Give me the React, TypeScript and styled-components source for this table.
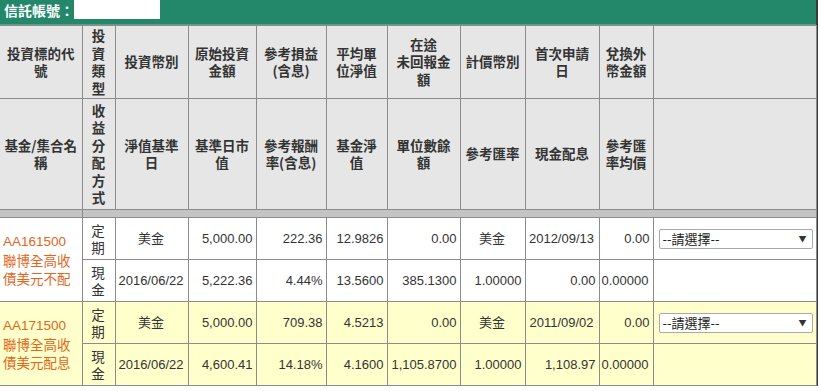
import { Fragment } from "react";
import styled, { createGlobalStyle } from "styled-components";

const GlobalStyle = createGlobalStyle`
  body {
    margin: 0;
    background: #ffffff;
    font-family: "Liberation Sans", "Noto Sans CJK TC", sans-serif;
  }
`;

const Panel = styled.div`
  width: 816px;
  border-right: 2px solid #3a3a3a;
`;

const TitleBar = styled.div`
  height: 25px;
  background-color: #23876a;
  border-bottom: 1px solid #5f9c89;
  box-sizing: border-box;
  display: flex;
  align-items: flex-start;
  padding-left: 4px;
`;

const TitleText = styled.span`
  color: #ffffff;
  font-family: "Noto Sans CJK TC", sans-serif;
  font-weight: 700;
  font-size: 14px;
  line-height: 20px;
`;

const AccountBox = styled.span`
  display: inline-block;
  width: 86px;
  height: 19px;
  background: #ffffff;
`;

const Table = styled.table`
  width: 816px;
  border-collapse: collapse;
  table-layout: fixed;
`;

const HeadCell = styled.th`
  background: #e6e6e6;
  border: 1px solid #8c8c8c;
  border-left: none;
  color: #333333;
  font-family: "Noto Sans CJK TC", sans-serif;
  font-weight: 700;
  font-size: 13.5px;
  line-height: 17.5px;
  padding: 0;
  text-align: center;
  vertical-align: middle;
`;

/* wraps its text at a fixed width, so the lines break where the original ones do */
const Wrap = styled.span<{ $w: number }>`
  display: block;
  width: ${(p) => p.$w}em;
  margin: 0 auto;
  word-break: break-all;
  white-space: pre-line;
`;

const SepCell = styled.td`
  background: #c4c4c4;
  border: 1px solid #8c8c8c;
  border-left: none;
  height: 7px;
  padding: 0;
`;

const Row = styled.tr<{ $alt?: boolean }>`
  background: ${(p) => (p.$alt ? "#ffffcc" : "#ffffff")};
`;

const Cell = styled.td<{ $align?: "left" | "center" | "right" }>`
  border: 1px solid #8c8c8c;
  border-left: none;
  color: #333333;
  font-size: 13px;
  line-height: 17px;
  height: 42px;
  padding: 0 3px 0 2px;
  box-sizing: border-box;
  text-align: ${(p) => p.$align ?? "right"};
  vertical-align: middle;
  white-space: nowrap;
`;

const FundCell = styled.td`
  border: 1px solid #8c8c8c;
  border-left: none;
  color: #e2661c;
  font-size: 13.5px;
  line-height: 17.5px;
  padding: 0 2px 0 3px;
  text-align: left;
  vertical-align: middle;
`;

const FundCode = styled.span`
  display: block;
  line-height: 20px;
`;

const FundName = styled.span`
  display: block;
  width: 5.3em;
  font-family: "Noto Sans CJK TC", sans-serif;
  word-break: break-all;
`;

const Stack = styled.span`
  display: block;
  width: 1.3em;
  margin: 0 auto;
  font-family: "Noto Sans CJK TC", sans-serif;
  font-size: 13.5px;
  line-height: 17px;
  text-align: center;
  white-space: normal;
  word-break: break-all;
`;

const SelectBox = styled.div`
  width: 144px;
  height: 18px;
  margin-left: 3px;
  border: 1px solid #a9a9a9;
  border-radius: 2px;
  background: #ffffff;
  display: flex;
  align-items: center;
  justify-content: space-between;
  padding: 0 5px 0 3px;
  font-family: "Noto Sans CJK TC", sans-serif;
  font-size: 13px;
  color: #222222;
`;

const Arrow = styled.span`
  font-size: 8px;
  color: #333333;
`;

const widths = [82, 33, 73, 68, 70, 61, 73, 65, 74, 54, 163];

type Head = { text: string; w: number };

const head1: Head[] = [
  { text: "投資標的代號", w: 5.3 },
  { text: "投資類型", w: 1.3 },
  { text: "投資幣別", w: 4.3 },
  { text: "原始投資金額", w: 4.3 },
  { text: "參考損益(含息)", w: 4.3 },
  { text: "平均單位淨值", w: 3.3 },
  { text: "在途\n未回報金額", w: 4.3 },
  { text: "計價幣別", w: 4.3 },
  { text: "首次申請日", w: 4.3 },
  { text: "兌換外幣金額", w: 3.3 },
  { text: "", w: 1 },
];

const head2: Head[] = [
  { text: "基金/集合名稱", w: 5.6 },
  { text: "收益分配方式", w: 1.3 },
  { text: "淨值基準日", w: 4.3 },
  { text: "基準日市值", w: 4.3 },
  { text: "參考報酬率(含息)", w: 4.3 },
  { text: "基金淨值", w: 3.3 },
  { text: "單位數餘額", w: 4.3 },
  { text: "參考匯率", w: 4.3 },
  { text: "現金配息", w: 4.3 },
  { text: "參考匯率均價", w: 3.3 },
  { text: "", w: 1 },
];

type Fund = {
  code: string;
  name: string;
  top: string[];
  bottom: string[];
};

const funds: Fund[] = [
  {
    code: "AA161500",
    name: "聯博全高收債美元不配",
    top: ["美金", "5,000.00", "222.36", "12.9826", "0.00", "美金", "2012/09/13", "0.00"],
    bottom: ["2016/06/22", "5,222.36", "4.44%", "13.5600", "385.1300", "1.00000", "0.00", "0.00000"],
  },
  {
    code: "AA171500",
    name: "聯博全高收債美元配息",
    top: ["美金", "5,000.00", "709.38", "4.5213", "0.00", "美金", "2011/09/02", "0.00"],
    bottom: ["2016/06/22", "4,600.41", "14.18%", "4.1600", "1,105.8700", "1.00000", "1,108.97", "0.00000"],
  },
];

type Align = "left" | "center" | "right";
const topAlign: Align[] = ["center", "right", "right", "right", "right", "center", "center", "right"];
const bottomAlign: Align[] = ["center", "right", "right", "right", "right", "right", "right", "left"];

const HeadRow = ({ cells, height }: { cells: Head[]; height: number }) => (
  <tr style={{ height }}>
    {cells.map((c, i) => (
      <HeadCell key={i}>
        <Wrap $w={c.w}>{c.text}</Wrap>
      </HeadCell>
    ))}
  </tr>
);

const App = () => {
  return (
    <Panel>
      <GlobalStyle />
      <TitleBar>
        <TitleText>信託帳號：</TitleText>
        <AccountBox />
      </TitleBar>
      <Table>
        <colgroup>
          {widths.map((w, i) => (
            <col key={i} style={{ width: w }} />
          ))}
        </colgroup>
        <thead>
          <HeadRow cells={head1} height={73} />
          <HeadRow cells={head2} height={111} />
        </thead>
        <tbody>
          <tr>
            <SepCell />
            <SepCell colSpan={10} />
          </tr>
          {funds.map((f, idx) => (
            <Fragment key={f.code}>
              <Row $alt={idx === 1}>
                <FundCell rowSpan={2}>
                  <FundCode>{f.code}</FundCode>
                  <FundName>{f.name}</FundName>
                </FundCell>
                <Cell $align="center">
                  <Stack>定期</Stack>
                </Cell>
                {f.top.map((v, i) => (
                  <Cell key={i} $align={topAlign[i]}>
                    {v}
                  </Cell>
                ))}
                <Cell $align="left">
                  <SelectBox>
                    <span>--請選擇--</span>
                    <Arrow>▼</Arrow>
                  </SelectBox>
                </Cell>
              </Row>
              <Row $alt={idx === 1}>
                <Cell $align="center">
                  <Stack>現金</Stack>
                </Cell>
                {f.bottom.map((v, i) => (
                  <Cell key={i} $align={bottomAlign[i]}>
                    {v}
                  </Cell>
                ))}
                <Cell />
              </Row>
            </Fragment>
          ))}
        </tbody>
      </Table>
    </Panel>
  );
};

export default App;
